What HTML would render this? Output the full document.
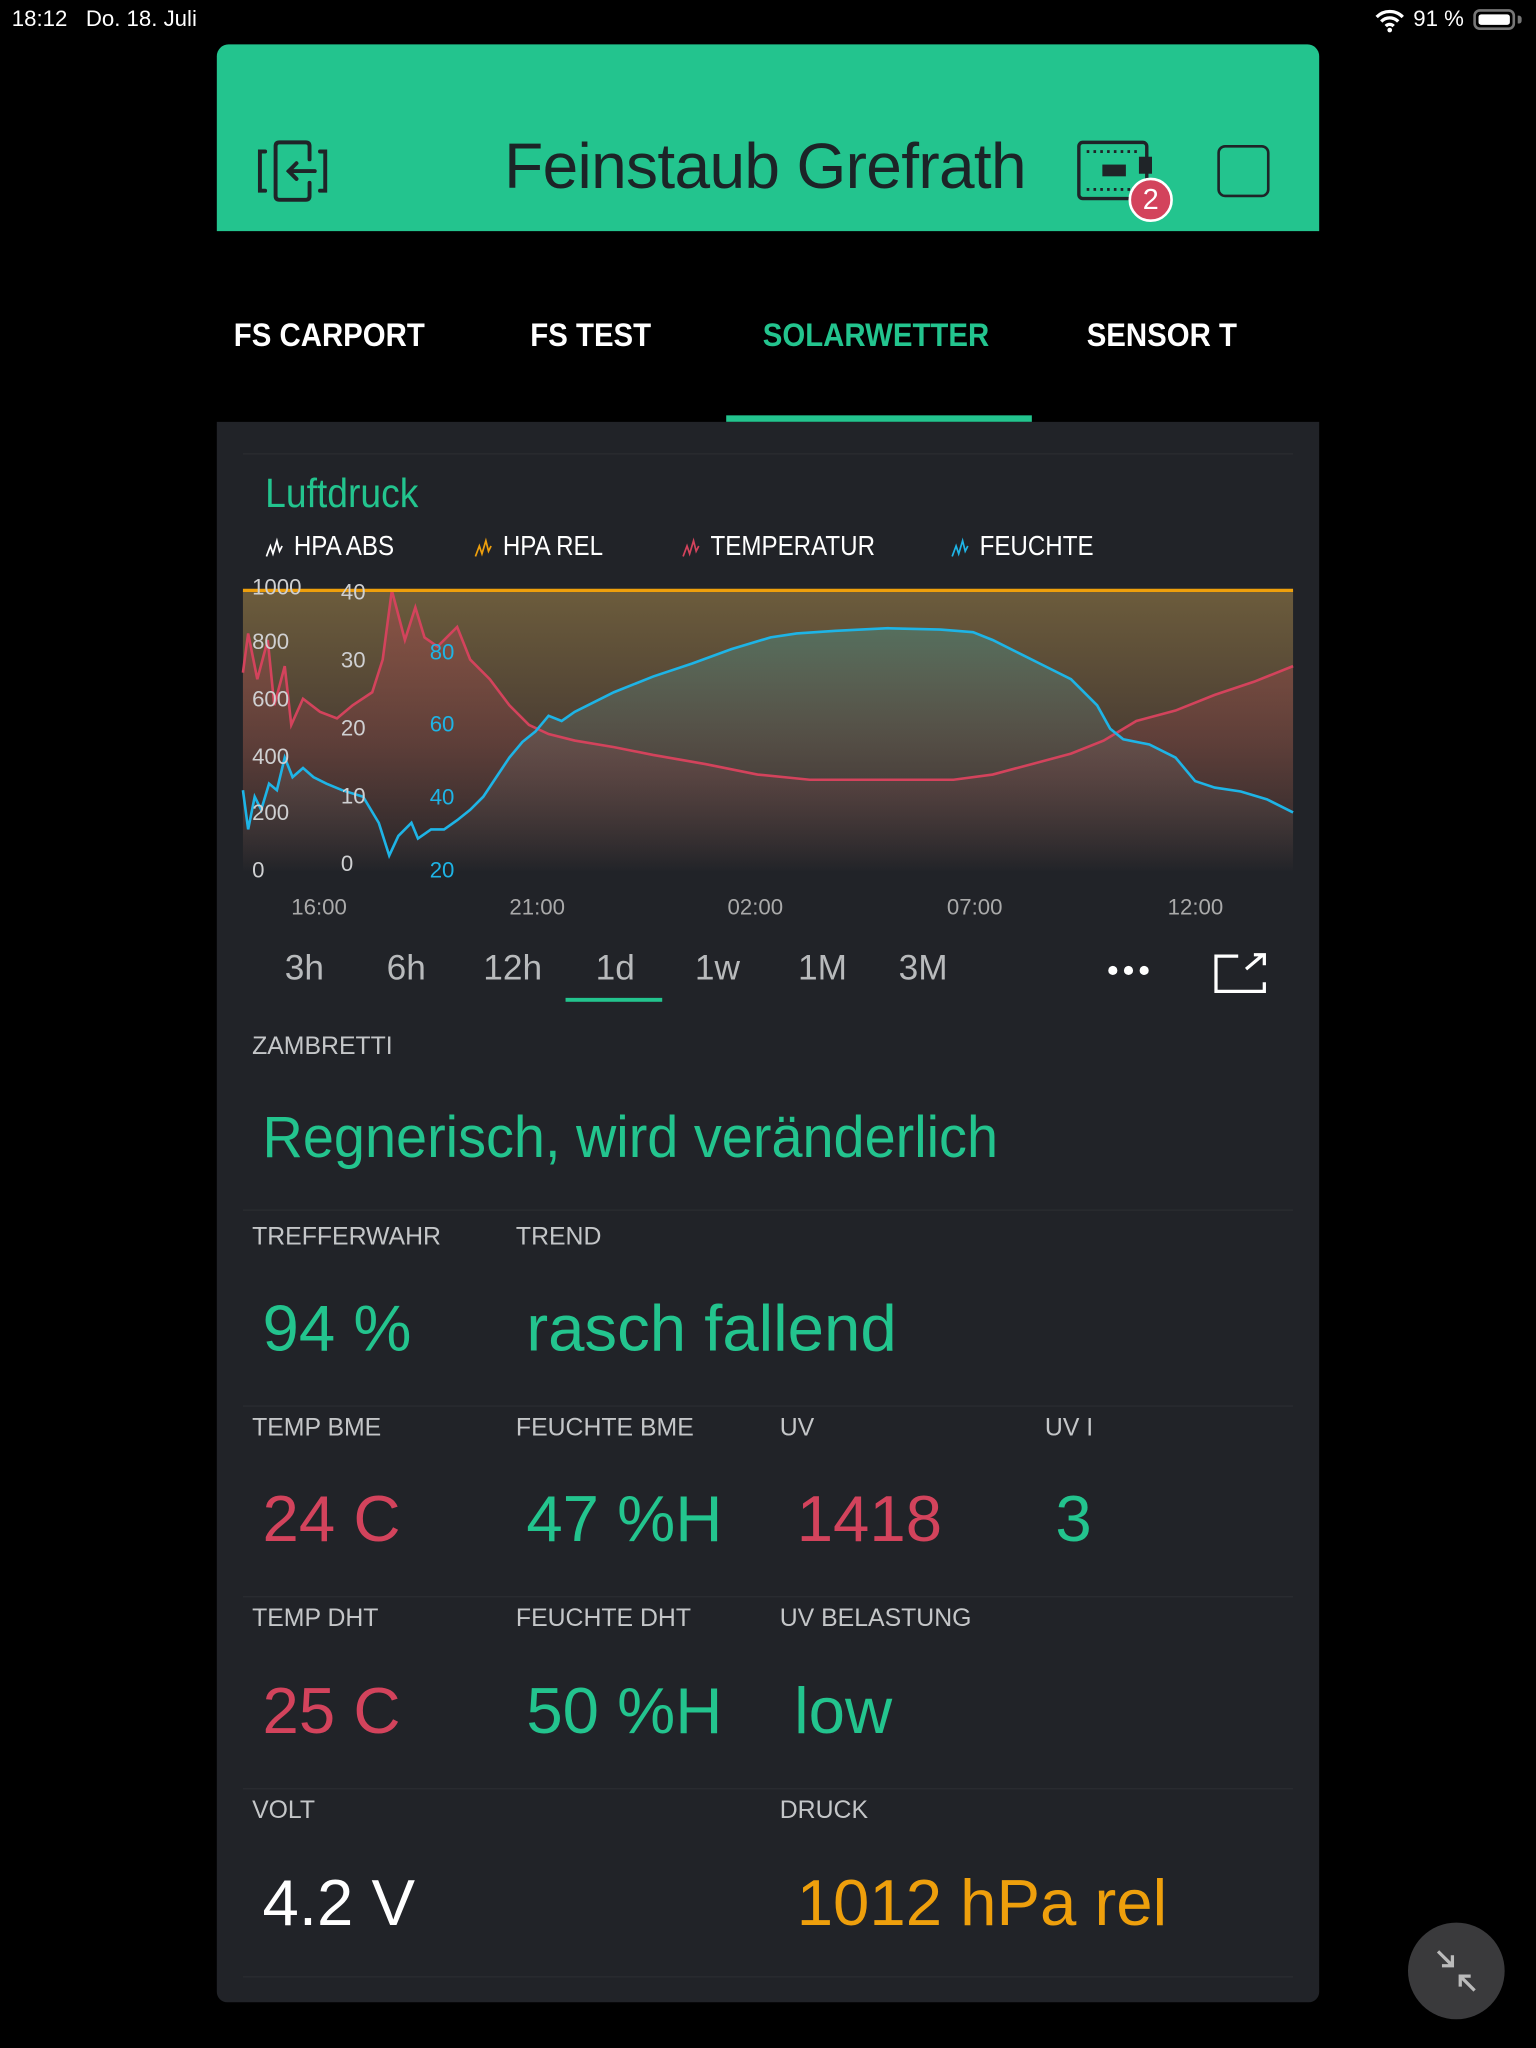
<!DOCTYPE html>
<html><head><meta charset="utf-8">
<style>
html,body{margin:0;padding:0;background:#000;width:1536px;height:2048px;overflow:hidden}
#w{position:absolute;left:0;top:0;width:1176px;height:1568px;transform:scale(1.30612);transform-origin:0 0;font-family:"Liberation Sans",sans-serif;color:#fff}
.a{position:absolute;white-space:nowrap}
.st{font-family:"Liberation Sans",sans-serif;font-size:17px;top:5px}
.lbl{font-size:19px;color:#c4c6c8}
.val{font-size:50px}
.g{color:#23c48e}.r{color:#d3435c}.o{color:#ee9f0c}
.tab{font-size:25px;font-weight:bold;top:243px;transform:scaleX(.9);transform-origin:0 0}
.lg{font-size:21px;top:407px;transform:scaleX(.88);transform-origin:0 0}
.rng{font-size:27px;color:#b8babc;top:726px}
.ax{font-size:17px;color:#cfd0d2}
.sep{position:absolute;height:1px;background:#2a2c31}
</style></head><body><div id="w">
<div class="a st" style="left:9px">18:12&nbsp;&nbsp;&nbsp;Do. 18. Juli</div>
<svg class="a" style="left:1052px;top:7px" width="24" height="18" viewBox="0 0 24 18"><path d="M2 6a14 14 0 0 1 20 0M5.5 9.5a9 9 0 0 1 13 0M9 13a4 4 0 0 1 6 0" stroke="#fff" stroke-width="2.5" fill="none"/><circle cx="12" cy="16" r="1.8" fill="#fff"/></svg>
<div class="a st" style="left:1082px">91 %</div>
<div class="a" style="left:1128px;top:7px;width:32px;height:16px;border:2px solid #777;border-radius:5px;box-sizing:border-box"><div style="position:absolute;left:2px;top:2px;right:2px;bottom:2px;background:#fff;border-radius:2px"></div></div>
<div class="a" style="left:1162px;top:12px;width:3px;height:6px;background:#777;border-radius:0 2px 2px 0"></div>

<div class="a" style="left:166px;top:34px;width:844px;height:143px;background:#23c48e;border-radius:9px 9px 0 0"></div>
<svg class="a" style="left:195px;top:106px" width="58" height="50" viewBox="0 0 58 50"><g stroke="#1f2428" stroke-width="3" fill="none" stroke-linecap="round"><path d="M8 10h-4v30h4"/><path d="M50 10h4v30h-4"/><path d="M42 34v10q0 3-3 3h-20q-3 0-3-3v-38q0-3 3-3h20q3 0 3 3v10"/><path d="M46 25h-20M32 19l-6 6 6 6"/></g></svg>
<div class="a" style="left:386px;top:100px;font-size:49px;color:#1c2427;letter-spacing:-0.5px">Feinstaub Grefrath</div>
<svg class="a" style="left:822px;top:106px" width="62" height="52" viewBox="0 0 62 52"><rect x="4" y="3" width="52" height="43" rx="3" stroke="#1f2428" stroke-width="2.6" fill="none"/><path d="M10 10h40M10 39h40" stroke="#1f2428" stroke-width="2.2" stroke-dasharray="2 3.2"/><rect x="22" y="20" width="18" height="9" fill="#1f2428"/><rect x="50" y="14" width="10" height="13" fill="#1f2428"/></svg>
<div class="a" style="left:864px;top:136px;width:34px;height:34px;border-radius:50%;background:#d3435c;border:2.5px solid #fff;box-sizing:border-box;text-align:center;font-size:22px;line-height:30px">2</div>
<div class="a" style="left:932px;top:111px;width:40px;height:40px;border:2.8px solid #1f2428;border-radius:6px;box-sizing:border-box"></div>

<div class="a tab" style="left:179px">FS CARPORT</div>
<div class="a tab" style="left:406px">FS TEST</div>
<div class="a tab g" style="left:584px">SOLARWETTER</div>
<div class="a tab" style="left:832px">SENSOR T</div>
<div class="a" style="left:556px;top:318px;width:234px;height:5px;background:#23c48e"></div>

<div class="a" style="left:166px;top:323px;width:844px;height:1210px;background:#212328;border-radius:0 0 8px 8px"></div>
<div class="sep" style="left:186px;top:347px;width:804px"></div>
<div class="a g" style="left:203px;top:360px;font-size:31px;transform:scaleX(.92);transform-origin:0 0">Luftdruck</div>
<svg class="a" style="left:203px;top:410px" width="14" height="18"><path d="M1 16l3-8 2 6 3-10 2 8 2-4" stroke="#fff" stroke-width="1.3" fill="none"/></svg>
<div class="a lg" style="left:225px">HPA ABS</div>
<svg class="a" style="left:363px;top:410px" width="14" height="18"><path d="M1 16l3-8 2 6 3-10 2 8 2-4" stroke="#ee9f0c" stroke-width="1.3" fill="none"/></svg>
<div class="a lg" style="left:385px">HPA REL</div>
<svg class="a" style="left:522px;top:410px" width="14" height="18"><path d="M1 16l3-8 2 6 3-10 2 8 2-4" stroke="#d3435c" stroke-width="1.3" fill="none"/></svg>
<div class="a lg" style="left:544px">TEMPERATUR</div>
<svg class="a" style="left:728px;top:410px" width="14" height="18"><path d="M1 16l3-8 2 6 3-10 2 8 2-4" stroke="#1eb4e6" stroke-width="1.3" fill="none"/></svg>
<div class="a lg" style="left:750px">FEUCHTE</div>

<svg class="a" style="left:0;top:0" width="1176" height="700" viewBox="0 0 1176 700">
<defs>
<linearGradient id="go" x1="0" y1="0" x2="0" y2="1"><stop offset="0" stop-color="#6c5c3c"/><stop offset="0.55" stop-color="#4a3d33"/><stop offset="1" stop-color="#212328"/></linearGradient>
<linearGradient id="gr" x1="0" y1="0" x2="0" y2="1"><stop offset="0" stop-color="#d3435c" stop-opacity="0.3"/><stop offset="1" stop-color="#d3435c" stop-opacity="0"/></linearGradient>
<linearGradient id="gb" x1="0" y1="0" x2="0" y2="1"><stop offset="0" stop-color="#3aa0a0" stop-opacity="0.35"/><stop offset="0.6" stop-color="#888" stop-opacity="0.15"/><stop offset="1" stop-color="#888" stop-opacity="0"/></linearGradient>
</defs>
<rect x="186" y="452" width="804" height="216" fill="url(#go)"/>
<polygon fill="url(#gr)" points="186,668 186,515 190,485 197,520 205,490 210,540 218,510 223,555 232,535 245,545 258,550 270,540 285,530 293,505 300,452 310,490 318,465 325,488 335,495 350,480 360,505 375,520 390,540 405,555 420,562 440,567 470,572 500,578 540,585 580,593 620,597 660,597 700,597 730,597 760,593 790,585 820,577 845,567 870,552 900,544 930,532 960,522 990,510 990,668"/>
<polygon fill="url(#gb)" points="186,668 186,605 190,635 195,610 200,620 206,600 212,605 218,580 224,595 232,588 240,595 250,600 262,605 278,610 290,630 298,655 305,640 315,630 320,642 330,635 340,635 350,628 360,620 370,610 380,595 390,580 400,568 410,560 420,548 430,552 440,545 450,540 470,530 500,518 530,508 560,497 590,488 610,485 640,483 680,481 720,482 745,484 760,490 780,500 800,510 820,520 840,540 850,558 860,566 880,570 900,580 915,598 930,603 950,606 970,612 990,622 990,668"/>
<polyline fill="none" stroke="#d3435c" stroke-width="2" points="186,515 190,485 197,520 205,490 210,540 218,510 223,555 232,535 245,545 258,550 270,540 285,530 293,505 300,452 310,490 318,465 325,488 335,495 350,480 360,505 375,520 390,540 405,555 420,562 440,567 470,572 500,578 540,585 580,593 620,597 660,597 700,597 730,597 760,593 790,585 820,577 845,567 870,552 900,544 930,532 960,522 990,510"/>
<polyline fill="none" stroke="#1eb4e6" stroke-width="2" points="186,605 190,635 195,610 200,620 206,600 212,605 218,580 224,595 232,588 240,595 250,600 262,605 278,610 290,630 298,655 305,640 315,630 320,642 330,635 340,635 350,628 360,620 370,610 380,595 390,580 400,568 410,560 420,548 430,552 440,545 450,540 470,530 500,518 530,508 560,497 590,488 610,485 640,483 680,481 720,482 745,484 760,490 780,500 800,510 820,520 840,540 850,558 860,566 880,570 900,580 915,598 930,603 950,606 970,612 990,622"/>
<line x1="186" y1="452" x2="990" y2="452" stroke="#ee9f0c" stroke-width="2.5"/>
</svg>
<div class="a ax" style="left:193px;top:440px">1000</div>
<div class="a ax" style="left:193px;top:482px">800</div>
<div class="a ax" style="left:193px;top:526px">600</div>
<div class="a ax" style="left:193px;top:570px">400</div>
<div class="a ax" style="left:193px;top:613px">200</div>
<div class="a ax" style="left:193px;top:657px">0</div>
<div class="a ax r" style="left:261px;top:444px">40</div>
<div class="a ax r" style="left:261px;top:496px">30</div>
<div class="a ax r" style="left:261px;top:548px">20</div>
<div class="a ax r" style="left:261px;top:600px">10</div>
<div class="a ax r" style="left:261px;top:652px">0</div>
<div class="a ax" style="left:329px;top:490px;color:#1eb4e6">80</div>
<div class="a ax" style="left:329px;top:545px;color:#1eb4e6">60</div>
<div class="a ax" style="left:329px;top:601px;color:#1eb4e6">40</div>
<div class="a ax" style="left:329px;top:657px;color:#1eb4e6">20</div>
<div class="a ax" style="left:223px;top:685px;color:#aaa">16:00</div>
<div class="a ax" style="left:390px;top:685px;color:#aaa">21:00</div>
<div class="a ax" style="left:557px;top:685px;color:#aaa">02:00</div>
<div class="a ax" style="left:725px;top:685px;color:#aaa">07:00</div>
<div class="a ax" style="left:894px;top:685px;color:#aaa">12:00</div>

<div class="a rng" style="left:218px">3h</div>
<div class="a rng" style="left:296px">6h</div>
<div class="a rng" style="left:370px">12h</div>
<div class="a rng g" style="left:456px">1d</div>
<div class="a rng" style="left:532px">1w</div>
<div class="a rng" style="left:611px">1M</div>
<div class="a rng" style="left:688px">3M</div>
<div class="a" style="left:433px;top:764px;width:74px;height:3px;background:#23c48e"></div>
<svg class="a" style="left:846px;top:735px" width="40" height="16"><circle cx="6" cy="8" r="3.5" fill="#fff"/><circle cx="18" cy="8" r="3.5" fill="#fff"/><circle cx="30" cy="8" r="3.5" fill="#fff"/></svg>
<svg class="a" style="left:928px;top:728px" width="44" height="34"><path d="M20 4h-17v27h37v-7M26 14l13-11M32 3h8v8" stroke="#fff" stroke-width="2.5" fill="none"/></svg>

<div class="a lbl" style="left:193px;top:791px">ZAMBRETTI</div>
<div class="a g" style="left:201px;top:845px;font-size:45px;transform:scaleX(.95);transform-origin:0 0">Regnerisch, wird veränderlich</div>
<div class="sep" style="left:186px;top:926px;width:804px"></div>
<div class="a lbl" style="left:193px;top:937px">TREFFERWAHR</div>
<div class="a lbl" style="left:395px;top:937px">TREND</div>
<div class="a val g" style="left:201px;top:988px">94 %</div>
<div class="a val g" style="left:403px;top:988px">rasch fallend</div>
<div class="sep" style="left:186px;top:1076px;width:804px"></div>
<div class="a lbl" style="left:193px;top:1083px">TEMP BME</div>
<div class="a lbl" style="left:395px;top:1083px">FEUCHTE BME</div>
<div class="a lbl" style="left:597px;top:1083px">UV</div>
<div class="a lbl" style="left:800px;top:1083px">UV I</div>
<div class="a val r" style="left:201px;top:1134px">24 C</div>
<div class="a val g" style="left:403px;top:1134px">47 %H</div>
<div class="a val r" style="left:610px;top:1134px">1418</div>
<div class="a val g" style="left:808px;top:1134px">3</div>
<div class="sep" style="left:186px;top:1222px;width:804px"></div>
<div class="a lbl" style="left:193px;top:1229px">TEMP DHT</div>
<div class="a lbl" style="left:395px;top:1229px">FEUCHTE DHT</div>
<div class="a lbl" style="left:597px;top:1229px">UV BELASTUNG</div>
<div class="a val r" style="left:201px;top:1281px">25 C</div>
<div class="a val g" style="left:403px;top:1281px">50 %H</div>
<div class="a val g" style="left:608px;top:1281px">low</div>
<div class="sep" style="left:186px;top:1369px;width:804px"></div>
<div class="a lbl" style="left:193px;top:1376px">VOLT</div>
<div class="a lbl" style="left:597px;top:1376px">DRUCK</div>
<div class="a val" style="left:201px;top:1428px">4.2 V</div>
<div class="a val o" style="left:610px;top:1428px">1012 hPa rel</div>
<div class="sep" style="left:186px;top:1513px;width:804px"></div>

<div class="a" style="left:1078px;top:1472px;width:74px;height:74px;border-radius:50%;background:#3a3a3c"></div>
<svg class="a" style="left:1096px;top:1490px" width="38" height="38"><g stroke="#bbb" stroke-width="2.5" fill="none"><path d="M5 4l11 11M16 7v8h-8"/><path d="M33 34l-11-11M22 31v-8h8"/></g></svg>
</div></body></html>
